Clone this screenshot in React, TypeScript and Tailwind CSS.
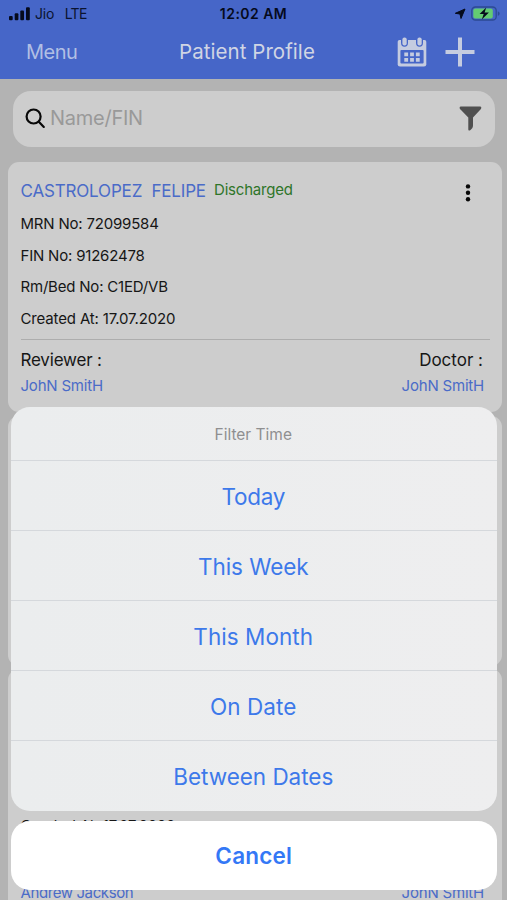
import React from "react";

type Patient = {
  name: string;
  mrn: string;
  fin: string;
  bed: string;
  created: string;
  reviewer: string;
  doctor: string;
};

const patients: Patient[] = [
  { name: "CASTROLOPEZ  FELIPE", mrn: "72099584", fin: "91262478", bed: "C1ED/VB", created: "17.07.2020", reviewer: "JohN SmitH", doctor: "JohN SmitH" },
  { name: "", mrn: "", fin: "", bed: "", created: "", reviewer: "", doctor: "" },
  { name: "", mrn: "", fin: "", bed: "", created: "17.07.2020", reviewer: "Andrew Jackson", doctor: "JohN SmitH" },
];

const filters = [
  { label: "Today", tracking: "tracking-[-0.3px]" },
  { label: "This Week", tracking: "tracking-[-0.05px]" },
  { label: "This Month", tracking: "tracking-[0.05px]" },
  { label: "On Date", tracking: "tracking-[0.1px]" },
  { label: "Between Dates", tracking: "tracking-[-0.03px]" },
];

function StatusBar() {
  return (
    <div className="grid h-[27px] grid-cols-3 items-center pr-[7px] pl-[9px] text-[14px] leading-none text-[#0b1430]">
      <div className="flex items-center">
        <svg width="21" height="14" viewBox="0 0 21 14" fill="#050a1c">
          <rect x="0" y="9" width="3.7" height="4.2" rx="1" />
          <rect x="5.7" y="6.3" width="3.7" height="6.9" rx="1" />
          <rect x="11.3" y="3.5" width="3.7" height="9.7" rx="1" />
          <rect x="17" y="0.3" width="3.8" height="12.9" rx="1" />
        </svg>
        <span className="ml-[5px] tracking-[-0.2px]">Jio</span>
        <span className="ml-[10.500px] tracking-[-0.700px]">LTE</span>
      </div>
      <div className="-ml-[2px] text-center font-semibold tracking-[0.450px] whitespace-nowrap text-[#050a1c]">12:02 AM</div>
      <div className="flex items-center justify-end gap-[5px]">
        <svg width="12" height="12" viewBox="0 0 12 12" fill="#050a1c">
          <path d="M11 1 7 10.500 6 6 1.300 5.300Z" stroke="#050a1c" strokeLinejoin="round" />
        </svg>
        <svg width="29" height="15" viewBox="0 0 29 15">
          <rect x="0.8" y="1" width="24.4" height="13" rx="3.6" fill="none" stroke="#2c4a92" strokeWidth="1.3" />
          <rect x="2.3" y="2.5" width="19.5" height="10" rx="2" fill="#63cb72" />
          <path d="M26.8 5.2v4.6c1.2-.4 1.8-1.300 1.800-2.300s-.6-1.900-1.800-2.300Z" fill="#2c4a92" />
          <path d="M15.200 1.600 8.600 8.100h4.100l-1.900 5.300 7.100-7h-4.300Z" fill="#050a1c" />
        </svg>
      </div>
    </div>
  );
}

function CalendarIcon() {
  return (
    <svg className="-ml-px" width="30" height="30" viewBox="0 0 30 30">
      <path d="M2.500 3H27.500Q29.300 3 29.300 4.800V27.200Q29.300 29.500 27 29.500H3Q0.700 29.500 0.700 27.200V4.800Q0.700 3 2.500 3Z" fill="#c5cce0" />
      <path d="M4 0V5.800Q4 9.800 7.500 9.800T11 5.800V0M19 0V5.800Q19 9.800 22.500 9.800T26 5.800V0" fill="#4666c8" />
      <rect x="5.400" y="0.500" width="4.300" height="8" rx="2" fill="#c5cce0" />
      <rect x="20.400" y="0.500" width="4.300" height="8" rx="2" fill="#c5cce0" />
      <rect x="3.400" y="13" width="23.200" height="13.500" rx="1" fill="#4666c8" />
      <path d="M7.300 15.500h3.800v3.700h-3.800ZM13.100 15.500h3.800v3.700h-3.800ZM18.900 15.500h3.800v3.700h-3.800ZM7.300 21h3.800v3.700h-3.800ZM13.100 21h3.800v3.700h-3.800ZM18.900 21h3.800v3.700h-3.800Z" fill="#c5cce0" />
    </svg>
  );
}

function Header() {
  return (
    <header className="h-[79px] bg-[#4666c8]">
      <StatusBar />
      <div className="grid h-[50px] grid-cols-3 items-center pr-[32px] pl-[26px] text-[20px] leading-none">
        <span className="tracking-[-0.500px] text-[#b1bfe4]">Menu</span>
        <span className="-ml-[7px] text-center text-[20.500px] tracking-[0.050px] whitespace-nowrap text-[#d0d5e4]">Patient Profile</span>
        <div className="flex items-center justify-end gap-[18px]">
          <CalendarIcon />
          <svg width="30" height="30" viewBox="0 0 30 30" fill="#c5cce0">
            <rect x="0.500" y="13" width="29" height="4" />
            <rect x="13" y="0.500" width="4" height="29" />
          </svg>
        </div>
      </div>
    </header>
  );
}

function SearchBar() {
  return (
    <div className="mr-[12px] ml-[13px] mt-[12px] flex h-[55.500px] items-center rounded-[18px] bg-[#cdcdcd] pr-[13px] pb-[1.500px] pl-[12px]">
      <svg width="21" height="21" viewBox="0 0 21 21" fill="none" stroke="#080808" strokeWidth="2.200" strokeLinecap="round">
        <circle cx="8.600" cy="8.500" r="7" />
        <path d="m13.800 13.700 5 5.200" />
      </svg>
      <span className="ml-[4px] flex-1 text-[20px] leading-none tracking-[-0.250px] text-[#999]">Name/FIN</span>
      <svg width="23" height="25" viewBox="0 0 23 25" fill="#505050">
        <path d="M2 0.500H21Q22.500 0.500 22.300 2 22.200 2.800 21 4L14 11.500V19.500Q14 21 13.200 22.300L11.500 24Q9.300 25.300 9.300 23.500V11.500L2 4Q0.700 2.800 0.600 2 0.500 0.500 2 0.500Z" />
      </svg>
    </div>
  );
}

function PatientCard({ p }: { p: Patient }) {
  return (
    <article className="h-[250px] shrink-0 rounded-[11px] bg-[#cdcdcd] pr-[18px] pl-[12.500px] text-[15px] tracking-[-0.200px] text-[#161616]">
      <div className="flex h-[46px] items-end">
        <h2 className="w-[193.500px] text-[17px] leading-[34px] tracking-[-0.170px] whitespace-pre text-[#4a6bc8]">{p.name}</h2>
        {p.name && <span className="mb-px flex-1 text-[15px] leading-[34px] text-[#2f7529]">Discharged</span>}
        {p.name && (
          <svg className="mr-[13px] mb-[5px]" width="6" height="20" viewBox="0 0 6 20" fill="#080808">
            <circle cx="3" cy="3.400" r="2.200" />
            <circle cx="3" cy="9.800" r="2.200" />
            <circle cx="3" cy="16.200" r="2.200" />
          </svg>
        )}
      </div>
      <div className="h-[127px] leading-[31.700px]">
        <p className="h-[31.700px]">{p.mrn && `MRN No: ${p.mrn}`}</p>
        <p className="h-[31.700px]">{p.fin && `FIN No: ${p.fin}`}</p>
        <p className="h-[31.700px]">{p.bed && `Rm/Bed No: ${p.bed}`}</p>
        <p className="h-[31.700px] tracking-[-0.150px]">{p.created && `Created At: ${p.created}`}</p>
      </div>
      <div className="-mr-[6px] mt-[4px] h-px bg-[#adadad]" />
      <div className="mt-[7px] flex h-[26px] items-center justify-between text-[17px] leading-[26px]">
        <span>{p.reviewer && "Reviewer :"}</span>
        <span className="mr-px tracking-[0px]">{p.doctor && "Doctor :"}</span>
      </div>
      <div className="flex h-[26px] items-center justify-between text-[15px] leading-[26px] text-[#4a6bc8]">
        <span className={p.reviewer.length > 10 ? "tracking-[-0.400px]" : ""}>{p.reviewer}</span>
        <span>{p.doctor}</span>
      </div>
    </article>
  );
}

function ActionSheet() {
  return (
    <div className="absolute inset-x-0 bottom-[10px] mr-[10px] ml-[10.500px] text-center text-[#3d79ea]">
      <div className="overflow-hidden rounded-[19px] bg-gradient-to-r from-[#ebedee] to-[#eeeeef] pb-[0.500px]">
        <div className="h-[53px] pr-px text-[15.500px] leading-[55px] text-[#8f8f90]">Filter Time</div>
        {filters.map((f) => (
          <div key={f.label} className="h-[70px] border-t border-[#d5d8dc] pr-px text-[22.500px] leading-[72px]">
            <span className={f.tracking}>{f.label}</span>
          </div>
        ))}
      </div>
      <div className="mt-[10px] h-[69.500px] rounded-[19px] bg-white text-[22.500px] leading-[70px] font-semibold tracking-[0.200px] text-[#3478f6]">Cancel</div>
    </div>
  );
}

export default function App() {
  return (
    <main className="relative h-[900px] w-[507px] overflow-hidden bg-[#b3b3b3] font-[Inter,sans-serif]">
      <Header />
      <SearchBar />
      <section className="mt-[15.500px] mr-[5px] ml-[8px] flex flex-col gap-[3.500px]">
        {patients.map((p, i) => (
          <PatientCard key={i} p={p} />
        ))}
      </section>
      <ActionSheet />
    </main>
  );
}
